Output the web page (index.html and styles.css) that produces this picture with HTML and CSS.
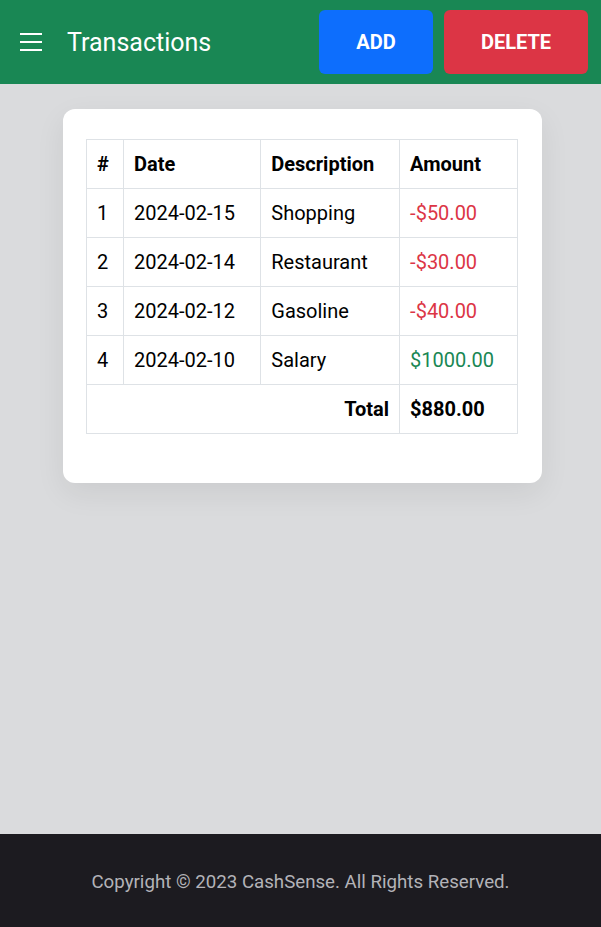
FILE: index.html
```html
<!DOCTYPE html>
<html lang="en">
<head>
<meta charset="utf-8">
<title>Transactions</title>
<link rel="stylesheet" href="styles.css">
</head>
<body>
<header class="topbar">
  <div class="brand">
    <button class="menu-btn" aria-label="Menu">
      <svg width="22" height="18" viewBox="0 0 22 18"><path d="M0 1h22M0 9h22M0 17h22" stroke="#fff" stroke-width="2"/></svg>
    </button>
    <h1 class="title">Transactions</h1>
  </div>
  <div class="actions">
    <button class="btn btn-add">ADD</button>
    <button class="btn btn-delete">DELETE</button>
  </div>
</header>
<main class="content">
  <section class="card">
    <table class="tx-table">
      <colgroup><col class="c-num"><col class="c-date"><col class="c-desc"><col class="c-amt"></colgroup>
      <thead>
        <tr><th>#</th><th>Date</th><th>Description</th><th>Amount</th></tr>
      </thead>
      <tbody>
        <tr><td>1</td><td>2024-02-15</td><td>Shopping</td><td class="neg">-$50.00</td></tr>
        <tr><td>2</td><td>2024-02-14</td><td>Restaurant</td><td class="neg">-$30.00</td></tr>
        <tr><td>3</td><td>2024-02-12</td><td>Gasoline</td><td class="neg">-$40.00</td></tr>
        <tr><td>4</td><td>2024-02-10</td><td>Salary</td><td class="pos">$1000.00</td></tr>
        <tr class="total"><td colspan="3" class="total-label">Total</td><td>$880.00</td></tr>
      </tbody>
    </table>
  </section>
</main>
<footer class="footer">Copyright © 2023 CashSense. All Rights Reserved.</footer>
</body>
</html>
```
FILE: styles.css
```css
* { box-sizing: border-box; }
html, body { margin: 0; padding: 0; }
body {
  font-family: Roboto, "Liberation Sans", sans-serif;
  min-height: 100vh;
  display: flex;
  flex-direction: column;
  background: #dadbdd;
  color: #000;
}
.topbar {
  height: 84px;
  background: #198754;
  display: flex;
  align-items: center;
  justify-content: space-between;
  padding: 0 13px 0 20px;
}
.brand { display: flex; align-items: center; gap: 25px; }
.menu-btn {
  background: none; border: 0; padding: 0; margin: 0;
  width: 22px; height: 18px; display: block;
}
.menu-btn svg { display: block; }
.title {
  margin: 0;
  font-size: 25px;
  font-weight: 400;
  color: #fff;
  line-height: 1;
}
.actions { display: flex; gap: 11px; }
.btn {
  height: 64px;
  border: 0;
  border-radius: 6px;
  color: #fff;
  font-family: Roboto, "Liberation Sans", sans-serif;
  font-size: 20px;
  font-weight: 700;
}
.btn-add { width: 114px; background: #0d6efd; }
.btn-delete { width: 144px; background: #dc3545; }
.content {
  flex: 1;
  display: flex;
  justify-content: center;
  align-items: flex-start;
  padding: 25px 0 0 4px;
}
.card {
  width: 479px;
  background: #fff;
  border-radius: 12px;
  padding: 30px 23px 49px 23px;
  box-shadow: 0 10px 30px rgba(0,0,0,0.07);
}
.tx-table {
  width: 432px;
  border-collapse: collapse;
  font-size: 20px;
}
.c-num { width: 37px; }
.c-date { width: 138px; }
.c-desc { width: 139px; }
.c-amt { width: 118px; }
.tx-table th, .tx-table td {
  border: 1px solid #dee2e6;
  padding: 10px 10px;
  line-height: 28px;
  text-align: left;
  font-weight: 400;
}
.tx-table th { font-weight: 700; }
.neg { color: #dc3545; }
.pos { color: #198754; }
.total td { font-weight: 700; }
.tx-table .total-label { text-align: right; }
.footer {
  height: 93px;
  padding-top: 3px;
  background: #1c1b20;
  color: #b3b3b8;
  font-size: 18.7px;
  display: flex;
  align-items: center;
  justify-content: center;
}
```
